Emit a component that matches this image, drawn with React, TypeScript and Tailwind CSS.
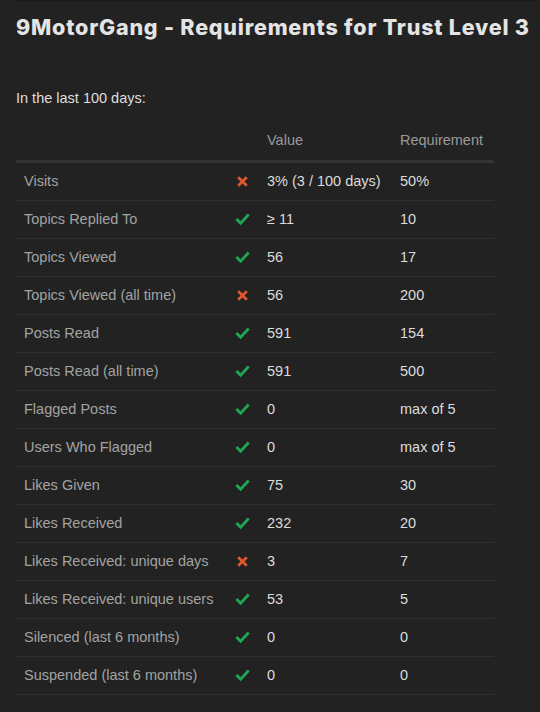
import React from "react";

type Row = { label: string; ok: boolean; value: string; req: string };

const rows: Row[] = [
  { label: "Visits", ok: false, value: "3% (3 / 100 days)", req: "50%" },
  { label: "Topics Replied To", ok: true, value: "≥ 11", req: "10" },
  { label: "Topics Viewed", ok: true, value: "56", req: "17" },
  { label: "Topics Viewed (all time)", ok: false, value: "56", req: "200" },
  { label: "Posts Read", ok: true, value: "591", req: "154" },
  { label: "Posts Read (all time)", ok: true, value: "591", req: "500" },
  { label: "Flagged Posts", ok: true, value: "0", req: "max of 5" },
  { label: "Users Who Flagged", ok: true, value: "0", req: "max of 5" },
  { label: "Likes Given", ok: true, value: "75", req: "30" },
  { label: "Likes Received", ok: true, value: "232", req: "20" },
  { label: "Likes Received: unique days", ok: false, value: "3", req: "7" },
  { label: "Likes Received: unique users", ok: true, value: "53", req: "5" },
  { label: "Silenced (last 6 months)", ok: true, value: "0", req: "0" },
  { label: "Suspended (last 6 months)", ok: true, value: "0", req: "0" },
];

function Check() {
  return (
    <svg width="15" height="12" viewBox="0 0 15 12" className="block -mt-[1px]">
      <path d="M1.4 6.1 L5.6 10.3 L13.7 1.5" fill="none" stroke="#1fa653" strokeWidth="2.8" strokeLinecap="butt" strokeLinejoin="miter" />
    </svg>
  );
}

function Cross() {
  return (
    <svg width="11" height="11" viewBox="0 0 11 11" className="block">
      <path d="M1.2 1.2 L9.8 9.8 M9.8 1.2 L1.2 9.8" fill="none" stroke="#e4572e" strokeWidth="2.7" strokeLinecap="butt" />
    </svg>
  );
}

export default function App() {
  return (
    <div className="min-h-[712px] w-[540px] bg-[#222222] font-['Liberation_Sans',Arial,sans-serif]">
      <div className="ml-4 border-t border-[#1b1b1b]" />
      <div className="px-4">
        <h1 className="pt-[10px] text-[21.5px] font-[800] leading-[32px] tracking-[0.8px] text-[#e4e4e4] font-['Inter','Open_Sans',sans-serif] whitespace-nowrap">
          9MotorGang - Requirements for Trust Level 3
        </h1>
        <p className="mt-[45px] text-[14.5px] leading-[20px] text-[#dedede]">In the last 100 days:</p>
        <div className="mt-[14px] w-[478px] text-[14.5px]">
          <div className="grid h-[41px] grid-cols-[216px_20px_140px_102px] items-center border-b-[3px] border-[#343434] text-[#9a9a9a]">
            <div />
            <div />
            <div className="pl-[15px]">Value</div>
            <div className="pl-2">Requirement</div>
          </div>
          {rows.map((r) => (
            <div
              key={r.label}
              className="grid h-[38px] grid-cols-[216px_20px_140px_102px] items-center border-b border-[#2f2f2f]"
            >
              <div className="pl-2 text-[#a3a3a3] whitespace-nowrap">{r.label}</div>
              <div className="flex justify-center">{r.ok ? <Check /> : <Cross />}</div>
              <div className="pl-[15px] text-[#dcdcdc] whitespace-nowrap">{r.value}</div>
              <div className="pl-2 text-[#dcdcdc] whitespace-nowrap">{r.req}</div>
            </div>
          ))}
        </div>
      </div>
    </div>
  );
}
